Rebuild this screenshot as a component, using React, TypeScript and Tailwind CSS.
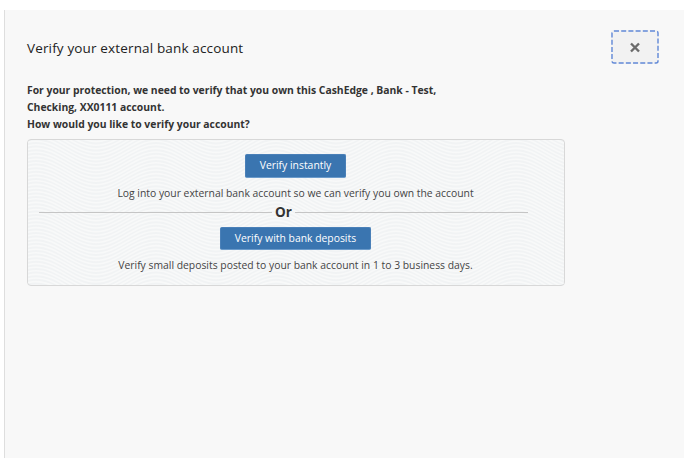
import React from "react";

const wave = (y: number) => {
  let d = `M-112 ${y}`;
  for (let i = 0; i < 6; i++) {
    const x = -112 + i * 120;
    d += `C${x + 22} ${y} ${x + 38} ${y + 22} ${x + 60} ${y + 22}S${x + 98} ${y} ${x + 120} ${y}`;
  }
  return d;
};

function WavePattern() {
  return (
    <svg className="absolute inset-0 h-full w-full" aria-hidden="true">
      {Array.from({ length: 50 }, (_, i) => (
        <path key={i} d={wave(-24 + i * 3.6)} fill="none" stroke="#f8f9f9" strokeWidth="1.6" />
      ))}
    </svg>
  );
}

function ActionButton({ children, className }: { children: string; className: string }) {
  return (
    <button className={`flex items-center justify-center rounded-[2px] border border-[#4a80b8] border-b-[#6b9bcb] bg-[#3a75b0] text-[10.38px] whitespace-nowrap text-white ${className}`}>
      {children}
    </button>
  );
}

export default function App() {
  return (
    <div className="h-[462px] w-[687px] bg-white pt-[10px] pl-1 font-['Open_Sans',sans-serif]">
      <main className="h-[448px] w-[680px] border-l border-[#dedede] bg-[#f8f8f8] pt-5 pl-[22px] text-[#333]">
        <header className="flex h-[34px] w-[632px] items-center justify-between">
          <h1 className="pt-0.5 text-[13.5px] font-medium tracking-[0.15px] whitespace-nowrap text-[#222]">Verify your external bank account</h1>
          <button aria-label="Close" className="flex h-[34px] w-12 items-center justify-center rounded-[3px] bg-[#f2f2f2]">
            <svg width="48" height="34" viewBox="0 0 48 34" fill="none">
              <rect x="1" y="1" width="46" height="32" rx="2" stroke="#6189d8" strokeWidth="1.4" strokeDasharray="5 2.2" />
              <path d="m20 13.5 8 8m0-8-8 8" stroke="#6b6b6b" strokeWidth="2.4" />
            </svg>
          </button>
        </header>
        <div className="mt-[18px] text-[10.36px] leading-[17px] font-bold whitespace-nowrap">
          <p>For your protection, we need to verify that you own this CashEdge , Bank - Test,</p>
          <p>Checking, XX0111 account.</p>
          <p>How would you like to verify your account?</p>
        </div>
        <section className="relative mt-[6px] h-[147px] w-[538px] overflow-hidden rounded-[4px] border border-[#d8d8d8] bg-[#f1f3f4]">
          <WavePattern />
          <div className="relative flex w-[535px] flex-col items-center pt-[14px] text-[10.36px] text-[#444]">
            <ActionButton className="h-6 w-[101px]">Verify instantly</ActionButton>
            <p className="mt-[7px] h-4 leading-4 whitespace-nowrap">Log into your external bank account so we can verify you own the account</p>
            <div className="mt-[3px] ml-[11px] flex h-4 w-[489px] items-center self-start">
              <span className="h-px flex-1 bg-[#c5c5c5]" />
              <span className="w-[23px] text-center text-[13.5px] leading-4 font-bold text-[#333]">Or</span>
              <span className="h-px flex-1 bg-[#c5c5c5]" />
            </div>
            <ActionButton className="mt-[7px] h-[23px] w-[151px]">Verify with bank deposits</ActionButton>
            <p className="mt-[7px] h-4 leading-4 whitespace-nowrap">Verify small deposits posted to your bank account in 1 to 3 business days.</p>
          </div>
        </section>
      </main>
    </div>
  );
}
